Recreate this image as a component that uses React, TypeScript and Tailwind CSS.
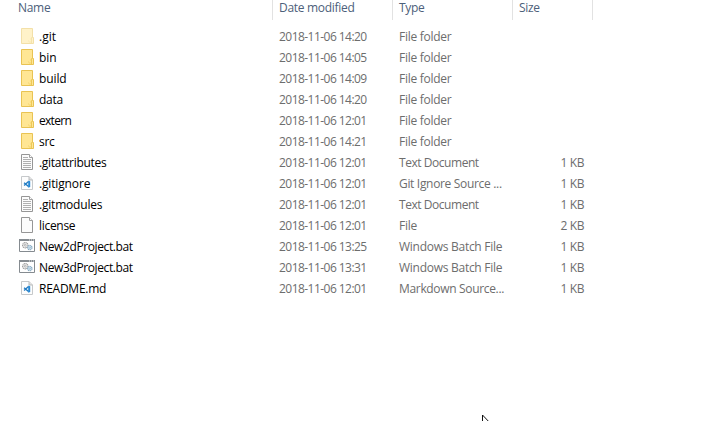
type Kind = 'hidden' | 'folder' | 'text' | 'code' | 'blank' | 'batch';

type Entry = { kind: Kind; name: string; date: string; type: string; size?: string };

const entries: Entry[] = [
  { kind: 'hidden', name: '.git', date: '14:20', type: 'File folder' },
  { kind: 'folder', name: 'bin', date: '14:05', type: 'File folder' },
  { kind: 'folder', name: 'build', date: '14:09', type: 'File folder' },
  { kind: 'folder', name: 'data', date: '14:20', type: 'File folder' },
  { kind: 'folder', name: 'extern', date: '12:01', type: 'File folder' },
  { kind: 'folder', name: 'src', date: '14:21', type: 'File folder' },
  { kind: 'text', name: '.gitattributes', date: '12:01', type: 'Text Document', size: '1 KB' },
  { kind: 'code', name: '.gitignore', date: '12:01', type: 'Git Ignore Source ...', size: '1 KB' },
  { kind: 'text', name: '.gitmodules', date: '12:01', type: 'Text Document', size: '1 KB' },
  { kind: 'blank', name: 'license', date: '12:01', type: 'File', size: '2 KB' },
  { kind: 'batch', name: 'New2dProject.bat', date: '13:25', type: 'Windows Batch File', size: '1 KB' },
  { kind: 'batch', name: 'New3dProject.bat', date: '13:31', type: 'Windows Batch File', size: '1 KB' },
  { kind: 'code', name: 'README.md', date: '12:01', type: 'Markdown Source...', size: '1 KB' },
];

const nameTracking: Record<string, string> = {
  '.git': 'tracking-normal',
  bin: 'tracking-[-0.1px]',
  build: 'tracking-[-0.1px]',
  extern: 'tracking-[-0.7px]',
  '.gitignore': 'tracking-[-0.15px]',
  '.gitmodules': 'tracking-[-0.2px]',
  'README.md': 'tracking-[-0.25px]',
  'New2dProject.bat': 'tracking-[-0.38px]',
  'New3dProject.bat': 'tracking-[-0.38px]',
};

const typeTracking: Record<string, string> = {
  'Text Document': 'tracking-[-0.45px]',
  'Git Ignore Source ...': 'tracking-[-0.32px]',
  'Markdown Source...': 'tracking-[-0.33px]',
};

function Gear({ cx, cy, r, fill, stroke }: { cx: number; cy: number; r: number; fill: string; stroke: string }) {
  return (
    <g>
      <circle cx={cx} cy={cy} r={r} fill={fill} stroke={stroke} strokeWidth="1.1" strokeDasharray="1.3 .5" />
      <circle cx={cx} cy={cy} r={r / 3} fill="#fff" stroke={stroke} strokeWidth=".7" />
    </g>
  );
}

function FileIcon({ kind }: { kind: Kind }) {
  if (kind === 'folder' || kind === 'hidden') {
    return (
      <svg width="18" height="18" viewBox="0 0 18 18" className={kind === 'hidden' ? 'opacity-50' : ''}>
        <path d="M2.5 1.5h11v9h1v6h-12z" fill="#ffe694" stroke="#e9c353" />
        <path d="M12.5 16v-5.5h1" fill="none" stroke="#edc958" />
        <path d="M9 14h1M11 12h1M10 15h2" stroke="#f4d36c" />
      </svg>
    );
  }
  if (kind === 'batch') {
    return (
      <svg width="18" height="18" viewBox="0 0 18 18">
        <path d="M.5 2.5h15v12H.5z" fill="#fff" stroke="#858b90" />
        <path d="M0 3h16" stroke="#858b90" strokeWidth="2" />
        <path d="M10 3h1M12 3h1M14 3h1" stroke="#e6eaed" />
        <Gear cx={6.3} cy={8.2} r={2.7} fill="#eeeeee" stroke="#9a9a9a" />
        <Gear cx={10.8} cy={10.6} r={2.2} fill="#d9ebf7" stroke="#86a9c0" />
      </svg>
    );
  }
  if (kind === 'code') {
    return (
      <svg width="18" height="18" viewBox="0 0 18 18">
        <path d="M2.5 2.5h7.5l3.5 3.5v9.5h-11z" fill="#fdfdfd" stroke="#c6c9cb" />
        <path d="M10 2.5v3.5h3.5" fill="#e2e2e2" stroke="#b8bbbd" />
        <path d="M9.2 6.5 11.2 7.3v5.6l-2 .8z" fill="#2389d8" />
        <path d="M9.5 7.6 5.1 11.5M5.1 8.7l4.4 3.9" fill="none" stroke="#247cc2" strokeWidth="1.4" />
      </svg>
    );
  }
  return (
    <svg width="18" height="18" viewBox="0 0 18 18">
      <path d="M2.5 1.5h8l3 3v12h-11z" fill="#fcfcfc" stroke="#969696" />
      <path d="M10.5 1.5v3h3" fill="#fff" stroke="#a0a0a0" />
      {kind === 'text' && <path d="M4 4.5h5M4 6.5h8M4 8.5h8M4 10.5h8M4 12.5h8M4 14.5h8" stroke="#b0b0b0" />}
    </svg>
  );
}

export default function App() {
  return (
    <main className="relative h-[421px] w-[718px] overflow-hidden bg-white font-['Open_Sans','Noto_Sans',sans-serif] text-[12px] leading-[21px] whitespace-nowrap">
      <header className="flex h-5 leading-4 tracking-[-0.3px] text-[#4c607a]">
        <div className="w-[273px] border-r border-[#e2e2e2] pl-[18px]">Name</div>
        <div className="w-[120px] border-r border-[#e2e2e2] pl-[6px]">Date modified</div>
        <div className="w-[120px] border-r border-[#e2e2e2] pl-[6px]">Type</div>
        <div className="w-[80px] border-r border-[#e2e2e2] pl-[6px]">Size</div>
      </header>
      <section className="pt-1.5 text-[#6d6d6d]">
        {entries.map((entry) => (
          <div key={entry.name} className="flex h-[21px]">
            <div className="flex w-[279px] pl-[19px] text-black">
              <div className="mt-px mr-0.5 w-[18px]"><FileIcon kind={entry.kind} /></div>
              <span className={nameTracking[entry.name] ?? 'tracking-[-0.3px]'}>{entry.name}</span>
            </div>
            <span className="w-[120px] tracking-[-0.54px]">2018-11-06 {entry.date}</span>
            <span className={`w-[120px] ${typeTracking[entry.type] ?? 'tracking-[-0.27px]'}`}>{entry.type}</span>
            <span className="w-[66px] pr-px text-right tracking-[-0.4px]">{entry.size}</span>
          </div>
        ))}
      </section>
      <svg className="absolute top-[414px] left-[482px]" width="12" height="18" viewBox="0 0 12 18">
        <path d="M.5 1v14l3-3 2.5 5 2-1-2.5-5H10z" fill="#fff" stroke="#111" />
      </svg>
    </main>
  );
}
